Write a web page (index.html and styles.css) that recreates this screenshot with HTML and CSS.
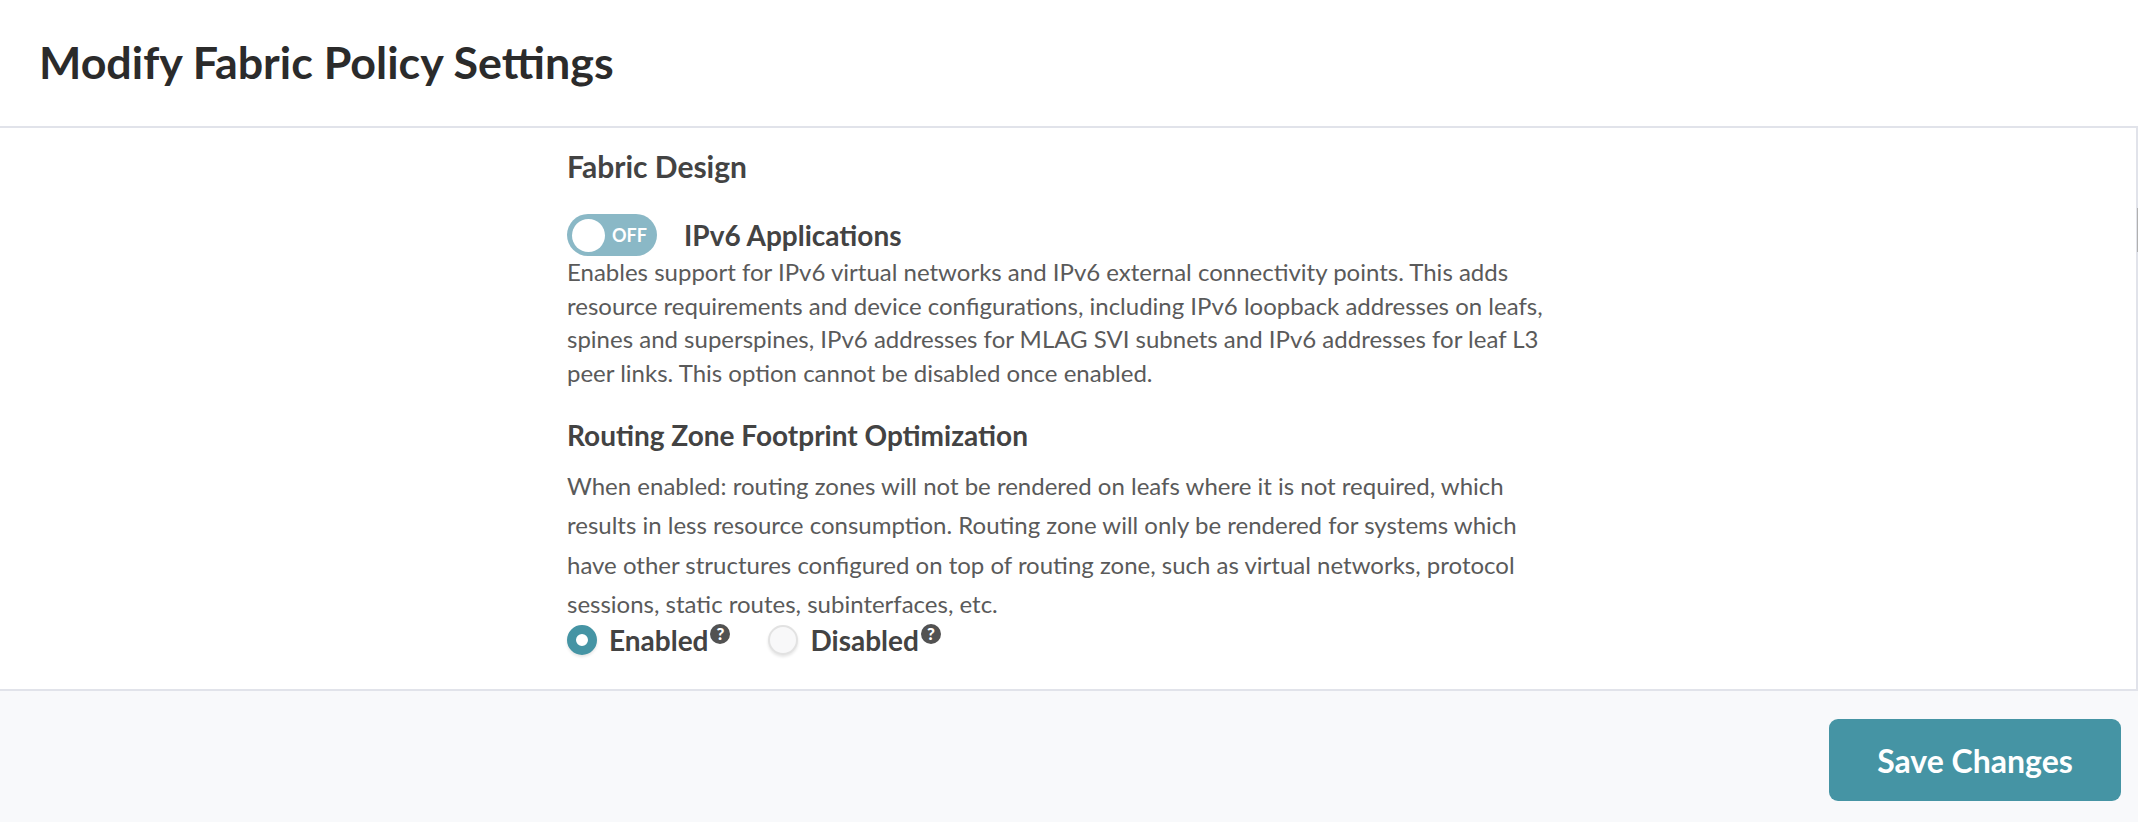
FILE: index.html
```html
<!DOCTYPE html>
<html lang="en">
<head>
    <meta charset="UTF-8">
    <title>Modify Fabric Policy Settings</title>
    <link rel="stylesheet" href="styles.css">
</head>
<body>
    <header class="page-header">
        <h1>Modify Fabric Policy Settings</h1>
    </header>
    <main class="page-body">
        <div class="settings">
            <h2 class="section-title">Fabric Design</h2>
            <div class="toggle-row">
                <span class="toggle">
                    <span class="toggle-knob"></span>
                    <span class="toggle-label">OFF</span>
                </span>
                <strong class="toggle-name">IPv6 Applications</strong>
            </div>
            <p class="help-tight">Enables support for IPv6 virtual networks and IPv6 external connectivity points. This adds resource requirements and device configurations, including IPv6 loopback addresses on leafs, spines and superspines, IPv6 addresses for MLAG SVI subnets and IPv6 addresses for leaf L3 peer links. This option cannot be disabled once enabled.</p>
            <h2 class="routing-title">Routing Zone Footprint Optimization</h2>
            <p class="help-loose">When enabled: routing zones will not be rendered on leafs where it is not required, which results in less resource consumption. Routing zone will only be rendered for systems which have other structures configured on top of routing zone, such as virtual networks, protocol sessions, static routes, subinterfaces, etc.</p>
            <div class="radio-row">
                <label class="radio">
                    <span class="radio-dot checked"></span>
                    <span class="radio-label">Enabled</span>
                    <span class="help-icon">?</span>
                </label>
                <label class="radio">
                    <span class="radio-dot"></span>
                    <span class="radio-label">Disabled</span>
                    <span class="help-icon">?</span>
                </label>
            </div>
        </div>
        <span class="scroll-thumb"></span>
    </main>
    <footer class="page-footer">
        <button class="save-button">Save Changes</button>
    </footer>
</body>
</html>
```

FILE: styles.css
```css
:root {
    --color-title: #2b2b2b;
    --color-heading: #434343;
    --color-text: #5a5a5a;
    --color-line: #e1e3ea;
    --color-teal: #4594a4;
    --color-teal-light: #8ab8c6;
    --color-footer: #f8f9fb;
}

* {
    box-sizing: border-box;
}

body {
    margin: 0;
    height: 822px;
    display: flex;
    flex-direction: column;
    overflow: hidden;
    font-family: Lato, sans-serif;
    background-color: #fff;
    color: var(--color-text);
}

.page-header {
    height: 128px;
    padding: 34px 0 0 39px;
    border-bottom: 2px solid var(--color-line);
}

h1 {
    margin: 0;
    font-size: 44.8px;
    line-height: 56px;
    font-weight: 700;
    color: var(--color-title);
}

.page-body {
    position: relative;
    height: 563px;
    padding-left: 567px;
    border-right: 2px solid var(--color-line);
    border-bottom: 2px solid var(--color-line);
}

.settings {
    width: 985px;
}

.section-title {
    margin: 0;
    padding-top: 20px;
    font-size: 30px;
    line-height: 36px;
    font-weight: 700;
    color: var(--color-heading);
}

.routing-title {
    margin: 0;
    padding-top: 28px;
    font-size: 28px;
    line-height: 36px;
    font-weight: 700;
    color: var(--color-heading);
}

.toggle-row {
    display: flex;
    align-items: center;
    gap: 27px;
    margin: 30px 0 -1px;
}

.toggle {
    width: 90px;
    height: 42px;
    display: flex;
    align-items: center;
    padding: 0 10px 0 5px;
    justify-content: space-between;
    border-radius: 21px;
    background-color: var(--color-teal-light);
}

.toggle-knob {
    width: 33px;
    height: 33px;
    border-radius: 50%;
    background-color: #fff;
}

.toggle-label {
    font-size: 18px;
    font-weight: 700;
    color: #fff;
}

.toggle-name {
    font-size: 28px;
    font-weight: 700;
    color: var(--color-heading);
}

.help-tight {
    margin: 0;
    font-size: 24px;
    line-height: 33.5px;
}

.help-loose {
    margin: 13px 0 0;
    font-size: 24px;
    line-height: 39.3px;
}

.radio-row {
    display: flex;
    gap: 38px;
}

.radio {
    display: flex;
    align-items: center;
}

.radio-dot {
    width: 30px;
    height: 30px;
    margin-right: 12px;
    border-radius: 50%;
    background-color: #f8f8f9;
    border: 2px solid #e2e2e2;
    box-shadow: 0 2px 3px rgba(0,0,0,0.1);
}

.radio-dot.checked {
    background-color: #fff;
    border: 9px solid var(--color-teal);
}

.radio-label {
    font-size: 28px;
    font-weight: 700;
    color: var(--color-heading);
}

.help-icon {
    width: 20px;
    height: 20px;
    margin: -12px 0 0 2px;
    border-radius: 50%;
    background-color: #525252;
    color: #fff;
    font-size: 17px;
    font-weight: 900;
    line-height: 20px;
    text-align: center;
}

.scroll-thumb {
    position: absolute;
    top: 80px;
    right: -2px;
    width: 1px;
    height: 44px;
    background-color: #b0b0b0;
}

.page-footer {
    flex: 1;
    display: flex;
    justify-content: flex-end;
    padding: 28px 17px 0 0;
    background-color: var(--color-footer);
}

.save-button {
    width: 292px;
    height: 82px;
    border: none;
    border-radius: 9px;
    background-color: var(--color-teal);
    color: #fff;
    font-family: Lato, sans-serif;
    font-size: 32px;
    font-weight: 700;
}
```
